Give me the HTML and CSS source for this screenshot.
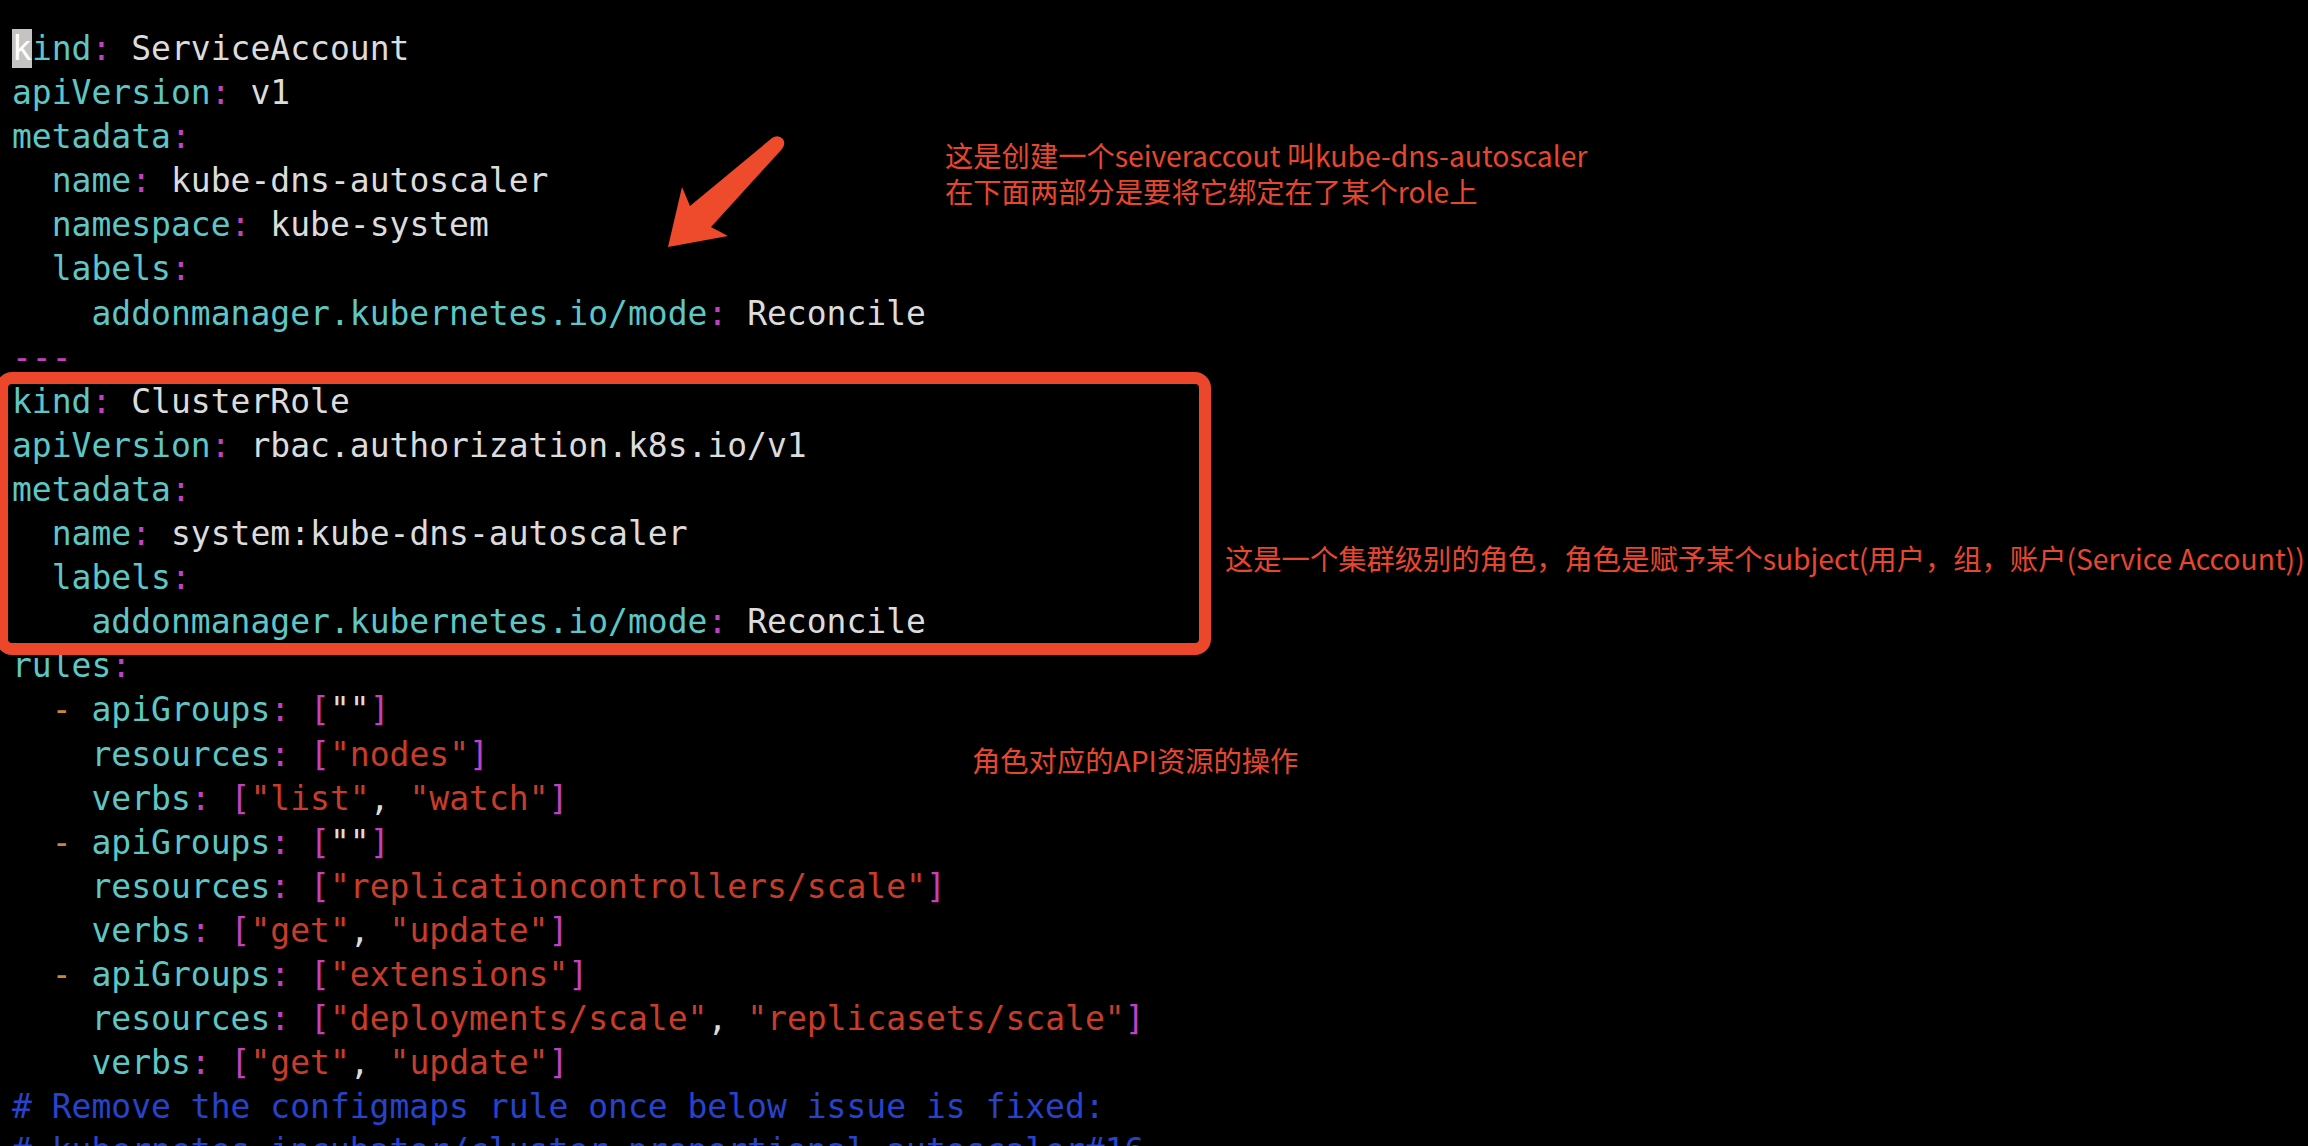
FILE: index.html
```html
<!DOCTYPE html>
<html lang="zh">
<head>
<meta charset="utf-8">
<title>kube-dns-autoscaler rbac</title>
<link rel="stylesheet" href="styles.css">
</head>
<body>
<div class="screen">
<pre class="code"><span class="line"><span class="cursor">k</span><span class="k">ind</span><span class="p">:</span> ServiceAccount</span>
<span class="line"><span class="k">apiVersion</span><span class="p">:</span> v1</span>
<span class="line"><span class="k">metadata</span><span class="p">:</span></span>
<span class="line">  <span class="k">name</span><span class="p">:</span> kube-dns-autoscaler</span>
<span class="line">  <span class="k">namespace</span><span class="p">:</span> kube-system</span>
<span class="line">  <span class="k">labels</span><span class="p">:</span></span>
<span class="line">    <span class="k">addonmanager.kubernetes.io/mode</span><span class="p">:</span> Reconcile</span>
<span class="line"><span class="p">---</span></span>
<span class="line"><span class="k">kind</span><span class="p">:</span> ClusterRole</span>
<span class="line"><span class="k">apiVersion</span><span class="p">:</span> rbac.authorization.k8s.io/v1</span>
<span class="line"><span class="k">metadata</span><span class="p">:</span></span>
<span class="line">  <span class="k">name</span><span class="p">:</span> system:kube-dns-autoscaler</span>
<span class="line">  <span class="k">labels</span><span class="p">:</span></span>
<span class="line">    <span class="k">addonmanager.kubernetes.io/mode</span><span class="p">:</span> Reconcile</span>
<span class="line"><span class="k">rules</span><span class="p">:</span></span>
<span class="line">  <span class="d">-</span> <span class="k">apiGroups</span><span class="p">:</span> <span class="p">[</span><span class="e">""</span><span class="p">]</span></span>
<span class="line">    <span class="k">resources</span><span class="p">:</span> <span class="p">[</span><span class="s">"nodes"</span><span class="p">]</span></span>
<span class="line">    <span class="k">verbs</span><span class="p">:</span> <span class="p">[</span><span class="s">"list"</span>, <span class="s">"watch"</span><span class="p">]</span></span>
<span class="line">  <span class="d">-</span> <span class="k">apiGroups</span><span class="p">:</span> <span class="p">[</span><span class="e">""</span><span class="p">]</span></span>
<span class="line">    <span class="k">resources</span><span class="p">:</span> <span class="p">[</span><span class="s">"replicationcontrollers/scale"</span><span class="p">]</span></span>
<span class="line">    <span class="k">verbs</span><span class="p">:</span> <span class="p">[</span><span class="s">"get"</span>, <span class="s">"update"</span><span class="p">]</span></span>
<span class="line">  <span class="d">-</span> <span class="k">apiGroups</span><span class="p">:</span> <span class="p">[</span><span class="s">"extensions"</span><span class="p">]</span></span>
<span class="line">    <span class="k">resources</span><span class="p">:</span> <span class="p">[</span><span class="s">"deployments/scale"</span>, <span class="s">"replicasets/scale"</span><span class="p">]</span></span>
<span class="line">    <span class="k">verbs</span><span class="p">:</span> <span class="p">[</span><span class="s">"get"</span>, <span class="s">"update"</span><span class="p">]</span></span>
<span class="line"><span class="c"># Remove the configmaps rule once below issue is fixed:</span></span>
<span class="line"><span class="c"># kubernetes-incubator/cluster-proportional-autoscaler#16</span></span></pre>

<div class="box"></div>

<svg class="arrow" width="140" height="130" viewBox="660 130 140 130" aria-hidden="true">
  <path d="M772 138 Q778 134 783 139 Q786 144 782 149 L711 227 L728 236 L668 247 L682 187 L690 206 Z" fill="#ee4a2c"/>
</svg>

<div class="note note-1">这是创建一个seiveraccout 叫kube-dns-autoscaler<br>在下面两部分是要将它绑定在了某个role上</div>
<div class="note note-2">这是一个集群级别的角色，角色是赋予某个subject(用户，组，账户(Service Account))</div>
<div class="note note-3">角色对应的API资源的操作</div>
</div>
</body>
</html>
```

FILE: styles.css
```css
html, body {
  margin: 0;
  padding: 0;
  background: #000;
  overflow: hidden;
}

.screen {
  position: relative;
  width: 2308px;
  height: 1146px;
  overflow: hidden;
  background: #000;
}

.code {
  margin: 0;
  padding: 27px 0 0 12px;
  font-family: "DejaVu Sans Mono", "Liberation Mono", monospace;
  font-size: 33px;
  line-height: 44.1px;
  color: #dcdcdc;
  white-space: pre;
}

.line {
  display: inline;
}

.cursor {
  background: #c4c4c4;
  color: #ffffff;
}

.k { color: #5ec6c4; }
.p { color: #c440c2; }
.s { color: #c83c2a; }
.e { color: #dcdcdc; }
.d { color: #c8893c; }
.c { color: #2743cc; }

.box {
  position: absolute;
  left: -4px;
  top: 372px;
  width: 1215px;
  height: 283px;
  box-sizing: border-box;
  border: 12px solid #ec472b;
  border-radius: 16px;
}

.arrow {
  position: absolute;
  left: 660px;
  top: 130px;
}

.note {
  position: absolute;
  font-family: "Noto Sans CJK SC", "Noto Sans", sans-serif;
  font-size: 28.3px;
  line-height: 36px;
  color: #e6472e;
  white-space: nowrap;
}

.note-1 {
  left: 945px;
  top: 137px;
}

.note-2 {
  left: 1225px;
  top: 540px;
}

.note-3 {
  left: 972px;
  top: 742px;
}
```
